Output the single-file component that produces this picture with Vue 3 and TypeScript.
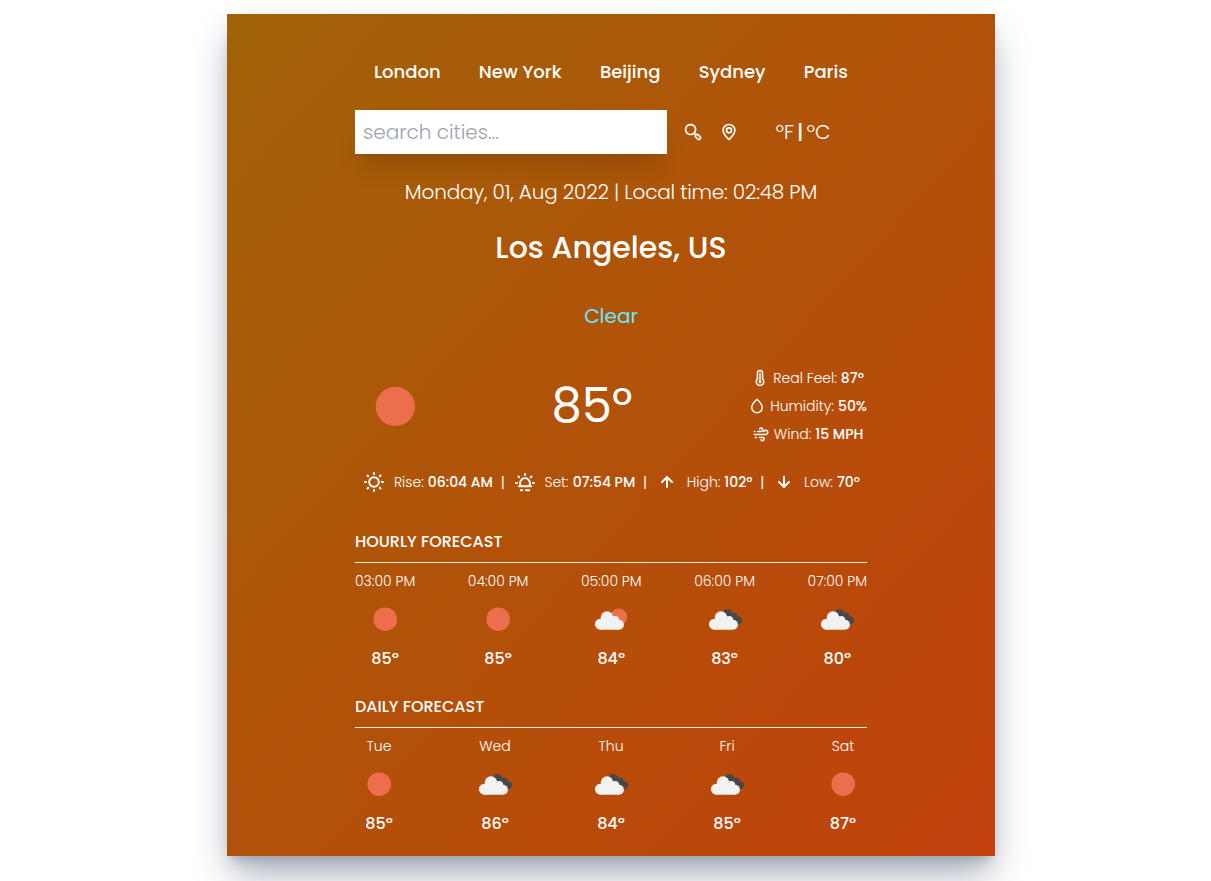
<script setup lang="ts">
import { ref } from 'vue'

type Sky = 'sun' | 'partly' | 'clouds'
interface Forecast {
  title: string
  kind: string
  entries: { label: string; sky: Sky; temp: string }[]
}

const query = ref('')
const cities = ['London', 'New York', 'Beijing', 'Sydney', 'Paris']

const forecasts: Forecast[] = [
  {
    title: 'hourly forecast',
    kind: 'hourly',
    entries: [
      { label: '03:00 PM', sky: 'sun', temp: '85º' },
      { label: '04:00 PM', sky: 'sun', temp: '85º' },
      { label: '05:00 PM', sky: 'partly', temp: '84º' },
      { label: '06:00 PM', sky: 'clouds', temp: '83º' },
      { label: '07:00 PM', sky: 'clouds', temp: '80º' },
    ],
  },
  {
    title: 'daily forecast',
    kind: 'daily',
    entries: [
      { label: 'Tue', sky: 'sun', temp: '85º' },
      { label: 'Wed', sky: 'clouds', temp: '86º' },
      { label: 'Thu', sky: 'clouds', temp: '84º' },
      { label: 'Fri', sky: 'clouds', temp: '85º' },
      { label: 'Sat', sky: 'sun', temp: '87º' },
    ],
  },
]
</script>

<template>
  <main class="card">
    <nav class="cities">
      <button v-for="city in cities" :key="city" type="button">{{ city }}</button>
    </nav>

    <div class="tools">
      <input v-model="query" class="search" type="text" placeholder="search cities..." />
      <svg class="i20" viewBox="0 0 24 24"><path d="M21.07,16.83,19,14.71a3.08,3.08,0,0,0-3.4-.57l-.9-.9a7,7,0,1,0-1.41,1.41l.89.9A3,3,0,0,0,14.71,19l2.12,2.12a3,3,0,0,0,4.24,0A3,3,0,0,0,21.07,16.83Zm-8.48-4.24a5,5,0,1,1,0-7.08A5,5,0,0,1,12.59,12.59Zm7.07,7.07a1,1,0,0,1-1.42,0l-2.12-2.12a1,1,0,0,1,0-1.42,1,1,0,0,1,1.42,0l2.12,2.12A1,1,0,0,1,19.66,19.66Z" /></svg>
      <svg class="i20" viewBox="0 0 24 24"><path d="M12,2A8,8,0,0,0,4,9.92c0,5.48,7.05,11.58,7.35,11.84a1,1,0,0,0,1.3,0C13,21.5,20,15.4,20,9.92A8,8,0,0,0,12,2Zm0,17.65c-1.67-1.59-6-6-6-9.73a6,6,0,0,1,12,0C18,13.62,13.67,18.06,12,19.65ZM12,6a4,4,0,1,0,4,4A4,4,0,0,0,12,6Zm0,6a2,2,0,1,1,2-2A2,2,0,0,1,12,12Z" /></svg>
      <div class="units">
        <button type="button">ºF</button>
        <span class="bar">|</span>
        <button type="button">ºC</button>
      </div>
    </div>

    <p class="date">Monday, 01, Aug 2022 | Local time: 02:48 PM</p>
    <h1 class="place">Los Angeles, US</h1>
    <p class="condition">Clear</p>

    <section class="current">
      <svg class="sky-large" viewBox="0 0 48 48"><circle cx="24.2" cy="24.2" r="11.8" fill="#ec6e4c" /></svg>
      <p class="temp">85º</p>
      <div class="details">
        <div class="detail">
          <svg class="i18" viewBox="0 0 24 24"><path d="M13,15.28V5.5a1,1,0,0,0-2,0v9.78A2,2,0,0,0,10,17a2,2,0,0,0,4,0A2,2,0,0,0,13,15.28ZM16.5,13V5.5a4.5,4.5,0,0,0-9,0V13a6,6,0,0,0,3.21,9.83A7,7,0,0,0,12,23,6,6,0,0,0,16.5,13Zm-2,7.07a4,4,0,0,1-6.42-2.2,4,4,0,0,1,1.1-3.61,1,1,0,0,0,.3-.71V5.5a2.5,2.5,0,0,1,5,0v8.08a1,1,0,0,0,.3.71,4,4,0,0,1-.28,5.8Z" /></svg>
          <span>Real Feel:</span><b>87º</b>
        </div>
        <div class="detail">
          <svg class="i18" viewBox="0 0 24 24"><path d="M12.65,2.24a1,1,0,0,0-1.3,0C11,2.52,4,8.63,4,14.06A8,8,0,0,0,12,22a8,8,0,0,0,8-7.94C20,8.57,12.95,2.5,12.65,2.24ZM12,20a6,6,0,0,1-6-5.94c0-3.72,4.34-8.13,6-9.7,1.67,1.57,6,6,6,9.7A6,6,0,0,1,12,20Z" /></svg>
          <span>Humidity:</span><b>50%</b>
        </div>
        <div class="detail">
          <svg class="i18 line" viewBox="0 0 24 24"><path d="M3.2 8.5h.6M7.5 8.5h4.5a2.2 2.2 0 1 0-1.8-3.4M3.2 12.5h15a2.8 2.8 0 1 0-2.6-3.8M4.5 16.5h1.5M10 16.5h4a2.2 2.2 0 1 1-1.9 3.3" /></svg>
          <span>Wind:</span><b>15 MPH</b>
        </div>
      </div>
    </section>

    <section class="stats">
      <svg class="i24 line" viewBox="0 0 24 24"><circle cx="12" cy="12" r="4.8" /><path d="M12 3v1M12 20v1M3 12h1M20 12h1M5.5 5.5l.7.7M17.8 17.8l.7.7M18.5 5.5l-.7.7M6.2 17.8l-.7.7" /></svg>
      <p><span>Rise:</span><b>06:04 AM</b></p>
      <span class="bar">|</span>
      <svg class="i24 line" viewBox="0 0 24 24"><path d="M6 16.2h12.2M8 16a4.9 4.9 0 1 1 8 0M12 4v1M3 12.9h1M20 12.9h1M5.5 6.5l.7.7M18.5 6.5l-.7.7M7.8 20.2h1.4M13 20.2h3.2" /></svg>
      <p><span>Set:</span><b>07:54 PM</b></p>
      <span class="bar">|</span>
      <svg class="i24" viewBox="0 0 24 24"><path d="M17.71,11.29l-5-5a1,1,0,0,0-.33-.21,1,1,0,0,0-.76,0,1,1,0,0,0-.33.21l-5,5a1,1,0,0,0,1.42,1.42L11,9.41V17a1,1,0,0,0,2,0V9.41l3.29,3.3a1,1,0,0,0,1.42,0A1,1,0,0,0,17.71,11.29Z" /></svg>
      <p><span>High:</span><b>102º</b></p>
      <span class="bar">|</span>
      <svg class="i24 down" viewBox="0 0 24 24"><path d="M17.71,11.29l-5-5a1,1,0,0,0-.33-.21,1,1,0,0,0-.76,0,1,1,0,0,0-.33.21l-5,5a1,1,0,0,0,1.42,1.42L11,9.41V17a1,1,0,0,0,2,0V9.41l3.29,3.3a1,1,0,0,0,1.42,0A1,1,0,0,0,17.71,11.29Z" /></svg>
      <p><span>Low:</span><b>70º</b></p>
    </section>

    <section v-for="f in forecasts" :key="f.kind" class="forecast" :class="f.kind">
      <h2>{{ f.title }}</h2>
      <hr />
      <div class="entries">
        <div v-for="e in f.entries" :key="e.label" class="entry">
          <span class="label">{{ e.label }}</span>
          <svg class="sky" viewBox="0 0 48 48">
            <circle v-if="e.sky === 'sun'" cx="24.2" cy="24.2" r="11.8" fill="#ec6e4c" />
            <template v-else>
              <circle v-if="e.sky === 'partly'" cx="31.7" cy="22" r="8.4" fill="#ec6e4c" />
              <g v-else fill="#484848">
                <circle cx="26.3" cy="18.7" r="4.8" />
                <circle cx="32.8" cy="21.7" r="4.2" />
                <circle cx="37.3" cy="25.2" r="3.8" />
                <path d="M24 20l9-1 4 10H26z" />
              </g>
              <g fill="#f2f2f0">
                <circle cx="13.4" cy="29.2" r="5.5" />
                <circle cx="20" cy="22.6" r="6.3" />
                <circle cx="28.2" cy="24.8" r="3.9" />
                <circle cx="31.9" cy="29.7" r="5" />
                <path d="M13.4 34.7V26l7-4 8 2 3.5 3v7.7z" />
              </g>
            </template>
          </svg>
          <b>{{ e.temp }}</b>
        </div>
      </div>
    </section>
  </main>
</template>

<style>
body {
  background: #fff;
}
</style>

<style scoped>
* {
  box-sizing: border-box;
  margin: 0;
  padding: 0;
}
.card {
  width: 768px;
  margin: 14px 0 25px 227px;
  padding: 44px 128px 20px;
  display: flow-root;
  color: #fff;
  font-family: Poppins, Inter, sans-serif;
  background: linear-gradient(to bottom right, #a16207, #c2410c);
  box-shadow: 0 20px 35px -5px #9ca3af, 0 8px 10px -6px #9ca3af;
}
button {
  border: 0;
  background: none;
  color: inherit;
  font: inherit;
  cursor: pointer;
}
svg {
  display: block;
  flex: none;
  fill: #fff;
}
.line {
  fill: none;
  stroke: #fff;
  stroke-width: 2;
  stroke-linecap: round;
}
.i18 { width: 18px; height: 18px; }
.i20 { width: 20px; height: 20px; }
.i24 { width: 24px; height: 24px; }
.down { transform: rotate(180deg); }
b { font-weight: 500; }

.cities {
  display: flex;
  justify-content: space-around;
  margin-bottom: 24px;
}
.cities button {
  font-size: 18px;
  line-height: 28px;
  font-weight: 500;
}
.tools {
  display: flex;
  align-items: center;
  gap: 16px;
}
.search {
  width: 312px;
  height: 44px;
  padding: 8px;
  border: 0;
  outline: 0;
  font: 300 20px/28px Poppins, Inter, sans-serif;
  background: #fff;
  box-shadow: 0 20px 25px -5px rgb(0 0 0 / 0.1), 0 8px 10px -6px rgb(0 0 0 / 0.1);
}
.search::placeholder {
  color: #9ca3af;
  opacity: 1;
}
.units {
  flex: 1;
  display: flex;
  justify-content: center;
  gap: 3px;
  margin-left: -16px;
  font-size: 20px;
  line-height: 28px;
  font-weight: 300;
}
.units .bar { font-weight: 500; }
.date {
  margin-top: 24px;
  text-align: center;
  font-size: 20px;
  line-height: 28px;
  font-weight: 300;
  letter-spacing: -0.19px;
}
.place {
  margin-top: 24px;
  text-align: center;
  font-size: 30px;
  line-height: 36px;
  font-weight: 500;
}
.condition {
  margin-top: 36px;
  text-align: center;
  font-size: 20px;
  line-height: 28px;
  color: #67e8f9;
}
.current {
  display: flex;
  justify-content: space-between;
  align-items: center;
  margin-top: 34px;
}
.sky-large {
  width: 80px;
  height: 80px;
}
.temp {
  padding-left: 1px;
  font-size: 48px;
  line-height: 48px;
}
.detail {
  display: flex;
  align-items: center;
  justify-content: center;
  gap: 4px;
  height: 28px;
  font-size: 14px;
  font-weight: 300;
}
.stats {
  display: flex;
  align-items: center;
  justify-content: center;
  gap: 7.8px;
  margin-top: 22px;
  font-size: 14px;
  line-height: 24px;
}
.stats p {
  display: flex;
  gap: 4px;
  font-weight: 300;
}
.forecast { margin-top: 24px; }
.forecast.hourly { margin-top: 36px; }
.forecast h2 {
  font-size: 16px;
  line-height: 24px;
  font-weight: 500;
  text-transform: uppercase;
}
.forecast hr {
  height: 1px;
  border: 0;
  margin: 8px 0;
  background: #fff;
  opacity: 0.9;
}
.entries {
  display: flex;
  justify-content: space-between;
}
.entry {
  display: flex;
  flex-direction: column;
  align-items: center;
}
.label {
  font-size: 14px;
  line-height: 20px;
  font-weight: 300;
}
.sky {
  width: 48px;
  height: 48px;
  margin: 4px 0;
}
.entry b {
  font-size: 16px;
  line-height: 24px;
}
</style>
